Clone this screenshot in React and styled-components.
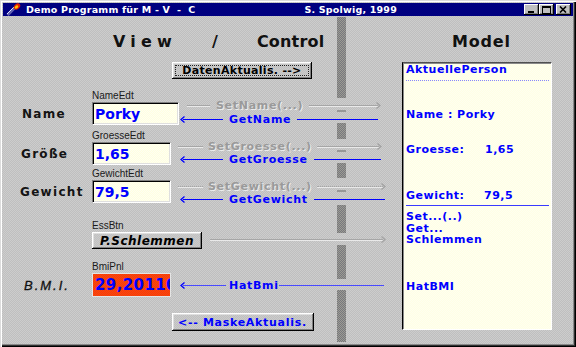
import React from 'react'
import styled, { createGlobalStyle } from 'styled-components'

const GlobalStyle = createGlobalStyle`
  html, body { margin: 0; padding: 0; background: #c4c4c4; }
  body { font-family: "DejaVu Sans", "Liberation Sans", sans-serif; }
  * { box-sizing: border-box; }
`

const dither = (a, b) => `repeating-conic-gradient(${a} 0 25%, ${b} 0 50%) 0 0 / 2px 2px`

const Window = styled.div`
  width: 576px;
  height: 347px;
  padding: 3px 3px 4px 3px;
  display: flex;
  flex-direction: column;
  gap: 1px;
  background: ${dither('#bfbfbf', '#cdcdcd')};
  box-shadow: inset 1px 1px 0 #dcdcdc, inset 2px 2px 0 #fff,
    inset -1px -1px 0 #000, inset -2px -2px 0 #303030, inset -3px -3px 0 #8a8a8a;
`

const TitleBar = styled.div`
  height: 13px;
  display: flex;
  align-items: center;
  padding: 0 2px 0 2px;
  background: #000080;
  color: #fff;
  font: bold 9.5px "DejaVu Sans", sans-serif;
  letter-spacing: 0.2px;
  white-space: pre;
`

const TitleText = styled.span`
  margin-left: ${p => p.$gap || 0}px;
  margin-right: ${p => p.$after || 0}px;
`

const TitleButtons = styled.div`
  display: flex;
  margin-left: auto;
`

const TitleButton = styled.span`
  width: 15px;
  height: 11px;
  margin-left: ${p => p.$gap || 0}px;
  background: #c0c0c0;
  box-shadow: inset -1px -1px 0 #000, inset 1px 1px 0 #fff, inset -2px -2px 0 #808080;
  display: flex;
  align-items: center;
  justify-content: center;
`

const Body = styled.div`
  flex: 1;
  display: grid;
  grid-template-columns: 88px 87px 224px 150px 1fr;
  grid-template-rows: 41px 31px 36px 40px 38px 46px 48px 46px;
`

const Bar = styled.div`
  grid-column: 3;
  grid-row: 1 / -1;
  margin-left: 159px;
  width: 9px;
  display: flex;
  flex-direction: column;
`

const BarPart = styled.div`
  height: ${p => p.$h}px;
  background: ${p =>
    p.$kind === 'bar' ? dither('#77777f', '#9c9c92') : p.$kind === 'dash' ? '#979797' : 'transparent'};
`

const Heading = styled.div`
  grid-row: 1;
  grid-column: ${p => p.$col};
  display: flex;
  align-items: flex-start;
  padding: 17px 0 0 ${p => p.$x}px;
  font: bold 16px/16px "DejaVu Sans", sans-serif;
  color: #111;
  z-index: 1;
`

const HeadWord = styled.span`
  margin-left: ${p => p.$gap || 0}px;
  letter-spacing: ${p => p.$ls || 0}px;
`

const WinButton = styled.div`
  grid-column: ${p => p.$col || 2};
  grid-row: ${p => p.$row};
  justify-self: start;
  align-self: start;
  width: ${p => p.$w}px;
  height: ${p => p.$h}px;
  margin: ${p => p.$top || 0}px 0 0 ${p => p.$x || 0}px;
  background: ${dither('#c0c0c0', '#cbcbcb')};
  box-shadow: inset -1px -1px 0 #000, inset 1px 1px 0 #fff, inset -2px -2px 0 #808080, inset 2px 2px 0 #dfdfdf;
  display: flex;
  align-items: center;
  justify-content: ${p => (p.$left ? 'flex-start' : 'center')};
  padding-left: ${p => p.$pad || 0}px;
  font: ${p => (p.$italic ? 'italic ' : '')}bold ${p => p.$size || 11}px "DejaVu Sans", sans-serif;
  letter-spacing: ${p => p.$ls || 0}px;
  color: ${p => p.$color || '#000'};
  white-space: nowrap;
  outline: ${p => (p.$focus ? '1px dotted #222' : 'none')};
  outline-offset: -4px;
`

const RowLabel = styled.div`
  grid-column: 1;
  grid-row: ${p => p.$row};
  align-self: end;
  height: ${p => p.$h}px;
  display: flex;
  align-items: center;
  padding-left: ${p => p.$x}px;
  font: bold 12px "DejaVu Sans", sans-serif;
  letter-spacing: 1.3px;
  color: #141414;
`

const ItalicLabel = styled(RowLabel)`
  font: italic 13px "Liberation Sans", sans-serif;
  letter-spacing: 2px;
  color: #111;
  -webkit-text-stroke: 0.3px #111;
`

const Field = styled.div`
  grid-column: 2;
  grid-row: ${p => p.$row};
  align-self: end;
  display: flex;
  flex-direction: column;
  padding-left: 1px;
`

const Caption = styled.div`
  font: 10px/13px "Liberation Sans", sans-serif;
  color: #1a1a1a;
`

const EditBox = styled.div`
  width: ${p => p.$w}px;
  height: 23px;
  padding: 0 2px;
  display: flex;
  align-items: center;
  background: ${dither('#ffffe0', '#fffff2')};
  border: 1px solid;
  border-color: #808080 #fff #fff #808080;
  box-shadow: inset 1px 1px 0 #000, inset -1px -1px 0 #dfdfdf;
  font: bold 14px "DejaVu Sans", sans-serif;
  color: #0000ff;
`

const FieldButton = styled(WinButton)`
  margin: 0;
`

const BmiBox = styled.div`
  width: 79px;
  height: 24px;
  padding-left: 2px;
  display: flex;
  align-items: center;
  overflow: hidden;
  white-space: nowrap;
  background: ${dither('#ff3c00', '#f04818')};
  border: 1px solid #e4e4e4;
  font: bold 15px "DejaVu Sans", sans-serif;
  letter-spacing: 0.4px;
  color: #0000ff;
`

const Arrows = styled.div`
  grid-column: 3;
  grid-row: ${p => p.$row};
  align-self: end;
  display: flex;
  flex-direction: column;
  gap: ${p => p.$gap || 0}px;
  margin-bottom: ${p => p.$drop || 0}px;
  z-index: 1;
`

const ArrowRow = styled.div`
  display: flex;
  align-items: center;
  height: 12px;
  margin: 0 ${p => p.$end}px 0 ${p => p.$start}px;
  font: bold 11px "DejaVu Sans", sans-serif;
  letter-spacing: 0.7px;
  white-space: nowrap;
  color: ${p => (p.$get ? '#0000ff' : '#9a9a9a')};
`

const Line = styled.span`
  flex: ${p => (p.$w ? `0 0 ${p.$w}px` : '1 1 auto')};
  height: 0;
  border-top: 1px ${p => (p.$dotted ? 'dotted' : 'solid')} ${p => p.$color};
  box-shadow: ${p => (p.$emboss ? '0 1px 0 #e9e9e9' : 'none')};
`

const Tag = styled.span`
  padding: 0 ${p => p.$r ?? p.$pad}px 0 ${p => p.$pad}px;
  text-shadow: ${p => (p.$soft ? '1px 1px 0 #ececec' : 'none')};
`

const Head = styled.svg`
  flex: 0 0 5px;
  margin: ${p => (p.$left ? '0 -2px 0 0' : '0 0 0 -2px')};
`

const ModelPanel = styled.div`
  grid-column: 4;
  grid-row: 2 / -1;
  margin: 4px 0 13px;
  padding: 0 2px 0 3px;
  display: flex;
  flex-direction: column;
  background: ${dither('#ffffe4', '#fffff0')};
  border: 1px solid;
  border-color: #505050 #fff #fff #000;
  box-shadow: inset 1px 1px 0 #8a8a8a;
  font: bold 11px/13px "DejaVu Sans", sans-serif;
  letter-spacing: 0.5px;
  color: #0000ff;
`

const Divider = styled.div`
  margin-top: ${p => p.$top}px;
  border-top: 1px ${p => (p.$dotted ? 'dotted' : 'solid')} ${p => p.$color};
`

const Entry = styled.div`
  margin-top: ${p => p.$top || 0}px;
  display: flex;
  white-space: pre;
`

const Key = styled.span`
  width: ${p => p.$w}px;
`

const Calls = styled.div`
  margin-top: ${p => p.$top}px;
  line-height: 11.5px;
`

const barParts = [
  ['bar', 81], ['gap', 12], ['dash', 2], ['gap', 11], ['bar', 16], ['gap', 11], ['dash', 2],
  ['gap', 11], ['bar', 15], ['gap', 12], ['dash', 2], ['gap', 13], ['bar', 28], ['gap', 12],
  ['bar', 34], ['gap', 11], ['bar', 52],
]

const LeftHead = ({ color = '#0000ff' }) => (
  <Head $left width="5" height="7" viewBox="0 0 5 7">
    <polyline points="4.5,0.5 1,3.5 4.5,6.5" fill="none" stroke={color} strokeWidth="1.3" />
  </Head>
)

const RightHead = ({ color = '#a3a3a3' }) => (
  <Head width="5" height="7" viewBox="0 0 5 7">
    <polyline points="0.5,0.5 4,3.5 0.5,6.5" fill="none" stroke={color} strokeWidth="1.3" />
  </Head>
)

const SetArrow = ({ label, start, lead, pad, end, dotted }) => (
  <ArrowRow $start={start} $end={end}>
    <Line $w={lead} $color="#a6a6a6" $emboss $dotted={dotted} />
    <Tag $pad={pad} $soft>{label}</Tag>
    <Line $color="#a6a6a6" $emboss $dotted={dotted} />
    <RightHead />
  </ArrowRow>
)

const GetArrow = ({ label, end, lead = 40, pad = 6, r = 6, color = '#0000ff' }) => (
  <ArrowRow $get $start={2} $end={end}>
    <LeftHead />
    <Line $w={lead} $color={color} />
    <Tag $pad={pad} $r={r}>{label}</Tag>
    <Line $color={color} />
  </ArrowRow>
)

const TorchIcon = () => (
  <svg width="15" height="13" viewBox="0 0 15 13" style={{ marginLeft: 1 }}>
    <line x1="1.5" y1="12" x2="8.5" y2="5" stroke="#6060b0" strokeWidth="3" />
    <line x1="1" y1="11" x2="8" y2="4" stroke="#e0e0ff" strokeWidth="1" />
    <ellipse cx="11" cy="3.5" rx="3.6" ry="2.6" transform="rotate(-40 11 3.5)" fill="#e02000" />
    <ellipse cx="10.5" cy="4" rx="2" ry="1.4" transform="rotate(-40 10.5 4)" fill="#ffc000" />
  </svg>
)

const App = () => {
  return (
    <>
      <GlobalStyle />
      <Window>
        <TitleBar>
          <TorchIcon />
          <TitleText $gap={5}>Demo Programm für M - V  -  C</TitleText>
          <TitleText style={{ marginLeft: 'auto' }} $after={18}>S. Spolwig, 1999</TitleText>
          <TitleButtons>
            <TitleButton>
              <svg width="8" height="7" viewBox="0 0 8 7"><rect x="1" y="5" width="6" height="2" fill="#000" /></svg>
            </TitleButton>
            <TitleButton>
              <svg width="9" height="8" viewBox="0 0 9 8"><rect x="0.5" y="0.5" width="8" height="7" fill="none" stroke="#000" /><rect x="0" y="0" width="9" height="2" fill="#000" /></svg>
            </TitleButton>
            <TitleButton $gap={2}>
              <svg width="8" height="7" viewBox="0 0 8 7"><path d="M1 0.5 L7 6.5 M7 0.5 L1 6.5" stroke="#000" strokeWidth="1.6" /></svg>
            </TitleButton>
          </TitleButtons>
        </TitleBar>

        <Body>
          <Bar>
            {barParts.map(([kind, h], i) => (
              <BarPart key={i} $kind={kind} $h={h} />
            ))}
          </Bar>

          <Heading $col="1 / 4" $x={110}>
            <HeadWord $ls={5.2}>View</HeadWord>
            <HeadWord $gap={35}>/</HeadWord>
            <HeadWord $gap={39} $ls={0.2}>Control</HeadWord>
          </Heading>
          <Heading $col={4} $x={50}>
            <HeadWord $ls={0.8}>Model</HeadWord>
          </Heading>

          <WinButton $row={2} $col="2 / 4" $top={4} $x={81} $w={140} $h={17} $focus $ls={0.3}>
            DatenAktualis. --&gt;
          </WinButton>

          <RowLabel $row={3} $h={23} $x={19}>Name</RowLabel>
          <Field $row={3}>
            <Caption>NameEdt</Caption>
            <EditBox $w={87}>Porky</EditBox>
          </Field>
          <Arrows $row={3} $gap={2}>
            <SetArrow label="SetName(...)" start={9} lead={23} pad={6} end={21} />
            <GetArrow label="GetName" end={24} />
          </Arrows>

          <RowLabel $row={4} $h={23} $x={18}>Größe</RowLabel>
          <Field $row={4}>
            <Caption>GroesseEdt</Caption>
            <EditBox $w={79}>1,65</EditBox>
          </Field>
          <Arrows $row={4} $gap={1}>
            <SetArrow label="SetGroesse(...)" start={0} lead={25} pad={5} end={20} />
            <GetArrow label="GetGroesse" end={21} />
          </Arrows>

          <RowLabel $row={5} $h={23} $x={17}>Gewicht</RowLabel>
          <Field $row={5}>
            <Caption>GewichtEdt</Caption>
            <EditBox $w={79}>79,5</EditBox>
          </Field>
          <Arrows $row={5} $gap={1} $drop={-2}>
            <SetArrow label="SetGewicht(...)" start={0} lead={25} pad={5} end={16} dotted />
            <GetArrow label="GetGewicht" end={17} />
          </Arrows>

          <Field $row={6}>
            <Caption>EssBtn</Caption>
            <FieldButton $w={110} $h={17} $italic $size={12} $ls={0.5}>P.Schlemmen</FieldButton>
          </Field>
          <Arrows $row={6} $drop={4}>
            <ArrowRow $start={32} $end={16}>
              <Line $color="#a6a6a6" $emboss />
              <RightHead />
            </ArrowRow>
          </Arrows>

          <ItalicLabel $row={7} $h={24} $x={21}>B.M.I.</ItalicLabel>
          <Field $row={7}>
            <Caption>BmiPnl</Caption>
            <BmiBox>29,20110</BmiBox>
          </Field>
          <Arrows $row={7} $drop={6}>
            <GetArrow label="HatBmi" end={18} lead={43} pad={3} r={0} color="#4a4aff" />
          </Arrows>

          <WinButton $row={8} $col="2 / 4" $top={16} $x={81} $w={142} $h={18} $left $pad={6} $color="#0000ff" $ls={0.7}>
            &lt;-- MaskeAktualis.
          </WinButton>

          <ModelPanel>
            <Entry>AktuellePerson</Entry>
            <Divider $top={4} $color="#8888ff" $dotted />
            <Entry $top={27}>Name : Porky</Entry>
            <Entry $top={22}><Key $w={79}>Groesse:</Key>1,65</Entry>
            <Entry $top={33}><Key $w={78}>Gewicht:</Key>79,5</Entry>
            <Divider $top={3} $color="#3a3aff" />
            <Calls $top={5}>
              <div>Set...(..)</div>
              <div>Get...</div>
              <div>Schlemmen</div>
            </Calls>
            <Entry $top={34}>HatBMI</Entry>
          </ModelPanel>
        </Body>
      </Window>
    </>
  )
}

export default App
